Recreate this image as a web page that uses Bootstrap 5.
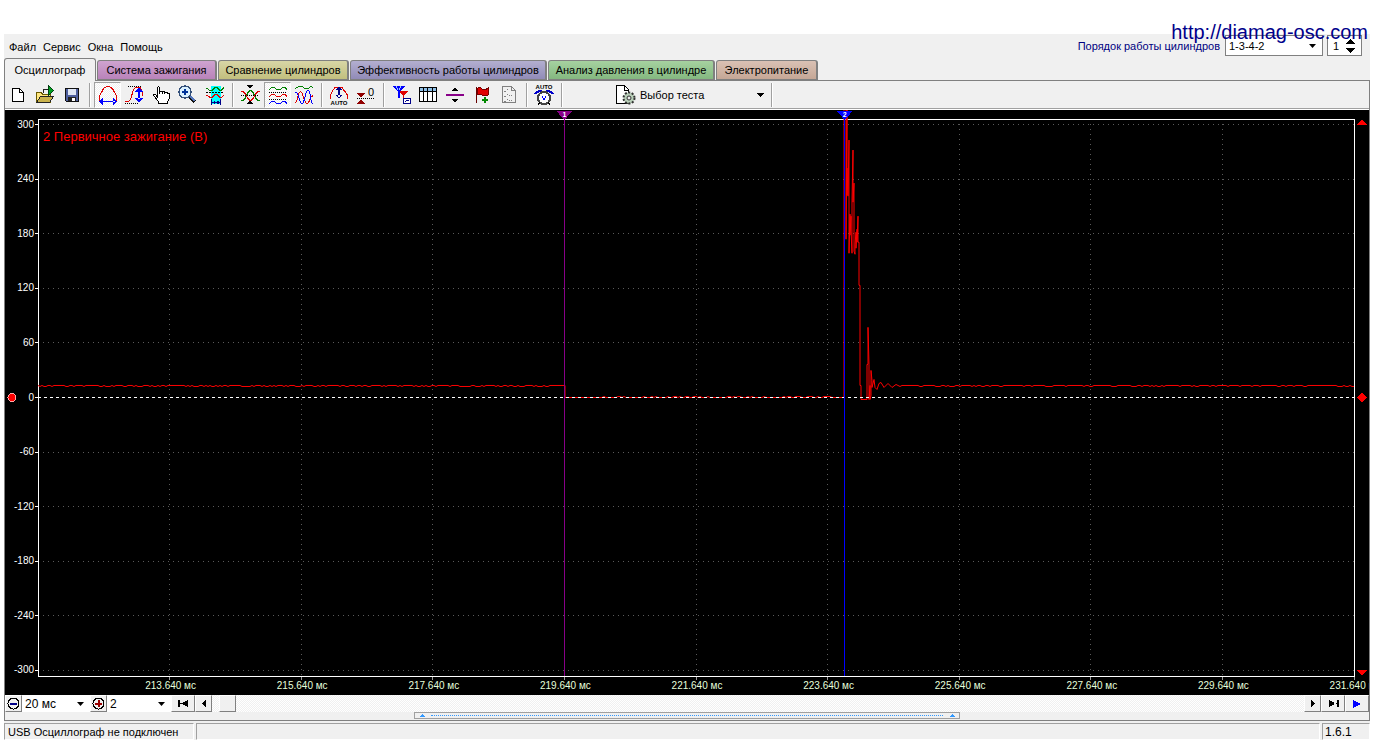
<!DOCTYPE html>
<html lang="ru">
<head>
<meta charset="utf-8">
<meta name="viewport" content="width=device-width, initial-scale=1">
<title>USB Осциллограф</title>
<link rel="stylesheet" href="https://cdn.jsdelivr.net/npm/bootstrap@5.3.0/dist/css/bootstrap.min.css">
<style>
  body { background: #fff; color: #000; font: 11px/14px "Liberation Sans", Arial, sans-serif; padding: 34px 12px 4px 4px; min-height: 100vh; }
  .app { background: #f0f0f0; }
  a { color: inherit; text-decoration: none; }
  .site-url { position: absolute; right: 14px; top: 20px; font-size: 20px; line-height: 24px; color: #00008b; z-index: 5; }
  .menubar { height: 24px; }
  .menubar nav { padding: 6px 5px 0; gap: 7px; }
  .order-box { padding-top: 1px; }
  .order { color: navy; margin-right: 5px; }
  select, input { font: inherit; color: #000; border: 0; border-radius: 0; background-color: #fff; appearance: none; padding: 0 3px; outline-offset: -1px; }
  select { background-image: url("data:image/svg+xml,%3Csvg xmlns='http://www.w3.org/2000/svg' width='7' height='4'%3E%3Cpath d='M0 0h7L3.5 4z'/%3E%3C/svg%3E"); background-repeat: no-repeat; background-position: right 6px center; }
  .framed { border: 1px solid #808080; height: 21px; background-color: #fff; }
  select.framed { width: 98px; }
  .spin { width: 35px; }
  .spin input { width: 11px; text-align: right; padding: 0; appearance: textfield; -moz-appearance: textfield; }
  .spin input::-webkit-inner-spin-button { display: none; }
  .spin span { margin-left: 7px; }
  button { border: 0; padding: 0; background: transparent; color: inherit; line-height: 0; }
  svg { display: block; shape-rendering: crispEdges; }
  .tabs { height: 22px; padding: 2px 0 0; gap: 1px; }
  .tabs button { font-size: 11px; line-height: 14px; height: 20px; border: 1px solid #808080; border-right-width: 2px; border-radius: 3px 3px 0 0; white-space: nowrap; text-align: center; }
  .tabs button.on { background: #f0f0f0; height: 23px; margin: -2px 0 -1px; border-bottom: 0; border-right-width: 1px; width: 92px; position: relative; }
  .t1 { width: 120px; background: linear-gradient(#cfa3d0, #b983ba); }
  .t2 { width: 131px; background: linear-gradient(#d8d6a6, #c2bf7e); }
  .t3 { width: 197px; background: linear-gradient(#b3afd0, #918bb7); }
  .t4 { width: 167px; background: linear-gradient(#a6d2a0, #84b880); }
  .t5 { width: 102px; background: linear-gradient(#dac1b4, #c5a796); }
  .sheet { border: 1px solid #808080; }
  .tools { height: 28px; border-bottom: 1px solid #a0a0a0; padding-top: 1px; }
  .tools button { width: 27px; height: 26px; }
  .tools .down { background: repeating-conic-gradient(#fff 0 25%, #f0f0f0 0 50%) 0 0/2px 2px; border: 1px solid; border-color: #a0a0a0 #fff #fff #a0a0a0; }
  .down svg { margin: -1px; }
  .vsep { width: 8px; height: 24px; margin: 1px 0; background: linear-gradient(90deg, transparent 3px, #a0a0a0 3px 4px, #fff 4px 5px, transparent 5px); }
  .tools .pick { width: 154px; margin-left: 48px; line-height: 14px; }
  .scope { background: #000; border-top: 1px solid #fff; padding: 9px 15px 19px 33px; overflow: hidden; min-height: 300px; height: 1px; }
  .scope svg { overflow: visible; }
  .scope text { font-size: 10px; fill: #fff; }
  .scope .chan { font-size: 13px; fill: #f00; }
  .scope .times text { fill: #e6ffdc; text-anchor: middle; }
  .scope .volts text { text-anchor: end; }
  .scope .pin text { font-size: 7px; font-weight: bold; text-anchor: middle; }
  .nav-row { height: 17px; }
  .nav-row select { height: 17px; font-size: 12px; }
  .sweep { width: 68px; }
  .factor { width: 64px; }
  .btn3d { background: #f0f0f0; height: 17px; border: 1px solid; border-color: #fff #808080 #808080 #fff; display: flex; align-items: center; justify-content: center; flex: none; }
  .w-s { width: 17px; } .w-m { width: 24px; }
  .track { background: repeating-conic-gradient(#fff 0 25%, #f0f0f0 0 50%) 0 0/2px 2px; padding-left: 7px; }
  .strip { height: 8px; }
  .overview { width: 40%; margin-left: 30%; height: 7px; border: 1px solid #a0a0a0; background: #f0f0f0; }
  .overview i { border-top: 1px dotted #3399ff; height: 0; margin: 0 6px; }
  .status { margin-top: 2px; gap: 2px; }
  .status div { border: 1px solid; border-color: #a0a0a0 #fff #fff #a0a0a0; height: 17px; padding: 1px 3px; white-space: nowrap; }
  .state { width: 190px; }
  .status .version { width: 48px; padding-left: 2px; font-size: 12px; }
</style>
</head>
<body class="d-flex flex-column">
<a class="site-url" href="http://diamag-osc.com">http://diamag-osc.com</a>
<div class="app d-flex flex-column flex-grow-1">
  <header class="menubar d-flex align-items-start">
    <nav class="d-flex"><a href="#">Файл</a><a href="#">Сервис</a><a href="#">Окна</a><a href="#">Помощь</a></nav>
    <div class="d-flex ms-auto align-items-center order-box">
      <label class="order" for="order">Порядок работы цилиндров</label>
      <select id="order" class="framed me-1"><option>1-3-4-2</option></select>
      <div class="framed spin d-flex align-items-center me-2">
        <input type="number" value="1" aria-label="Цилиндр">
        <span class="d-flex flex-column gap-1"><button aria-label="Больше"><svg width="9" height="5"><path d="M4.5 0L9 5H0z"/></svg></button><button aria-label="Меньше"><svg width="9" height="5"><path d="M4.5 5L9 0H0z"/></svg></button></span>
      </div>
    </div>
  </header>
  <div class="tabs d-flex" role="tablist">
    <button class="on" role="tab" aria-selected="true">Осциллограф</button><button class="t1" role="tab">Система зажигания</button><button class="t2" role="tab">Сравнение цилиндров</button><button class="t3" role="tab">Эффективность работы цилиндров</button><button class="t4" role="tab">Анализ давления в цилиндре</button><button class="t5" role="tab">Электропитание</button>
  </div>
  <main class="sheet d-flex flex-column flex-grow-1">
    <div class="tools d-flex" role="toolbar">
      <button aria-label="Новый"><svg width="27" height="26"><path d="M7.500 6.500h7l4 4v9h-11z" fill="#fff" stroke="#000"/><path d="M14.500 6.500v4h4" fill="none" stroke="#000"/></svg></button>
      <button aria-label="Открыть"><svg width="27" height="26"><path d="M4.500 20.500v-10h5l1 2h8v8z" fill="#ffe680" stroke="#6b5a00"/><path d="M4.500 20.500l4-6h13l-4 6z" fill="#c9b24c" stroke="#222"/><path d="M11.500 10.500v-3h4" fill="none" stroke="#222"/><path d="M16.500 3.500l5 5-5 5z" fill="#00a020" stroke="#004010"/></svg></button>
      <button aria-label="Сохранить"><svg width="27" height="26"><path d="M6.500 6.500h13v13h-12l-1-1z" fill="#4e5f9e" stroke="#111"/><path d="M9 7h8v6H9z" fill="#dfe6f5"/><path d="M9 15h8v4H9z" fill="#222"/><path d="M13 16h3v3h-3z" fill="#fff"/></svg></button>
      <span class="vsep"></span>
      <button class="down" aria-label="Период"><svg width="27" height="26"><path d="M5.500 19V15Q6 12 8 9.500Q10 4.500 14 4.500T20 9.500Q22 12 22.500 15V19" fill="none" stroke="#e00000"/><path d="M7 19h14v1H7zM5 19.500l4-4v8zM23 19.500l-4-4v8z" fill="#00f"/></svg></button>
      <button aria-label="Размах"><svg width="27" height="26"><path d="M7 4.500h13M4 21.500h14" stroke="#000" stroke-dasharray="1 1"/><path d="M4 19.500h3q3-1 4-7t4-7h3q3 0 4 8" fill="none" stroke="#e00000"/><path d="M17 9h2v8h-2zM18 5l4 5h-8zM18 21l4-5h-8z" fill="#00f"/></svg></button>
      <button aria-label="Рука"><svg width="27" height="26"><path d="M9.500 15.500V5.500q1-2 2 0v6-2q2-1 2.500 0v2-2q2-1 2.500 0v2-1q2-1 3 0v1q2-1 2 1v4l-2 3v2h-9v-2l-5-6q0-2 2-1z" fill="#fff" stroke="#000"/></svg></button>
      <button aria-label="Масштаб"><svg width="27" height="26" shape-rendering="auto"><path d="M14 14l6 6" stroke="#111" stroke-width="4"/><path d="M14 13l6 6" stroke="#5577bb" stroke-width="2"/><circle cx="10" cy="10" r="6" fill="#d9f0ff" stroke="#34507a" stroke-width="1.500"/><path d="M10 7v6M7 10h6" stroke="#003399" stroke-width="2"/></svg></button>
      <button aria-label="Сечение"><svg width="27" height="26"><path d="M9 4h10v18H9z" fill="#0ff"/><path d="M4 6.500q2 0 4 2h2l3-3h2l3 3h1l3-3" fill="none" stroke="green"/><path d="M4 10.500h18" stroke="#000" stroke-dasharray="2 1"/><path d="M4 13.500q3 0 4 2h2l3-3h2l3 3h1l3-2" fill="none" stroke="#e00000"/><path d="M9.500 17v6M18.500 17v6M10 20.500h8" stroke="#008"/><path d="M10 20.500l3-2v4zM18 20.500l-3-2v4z" fill="#008"/></svg></button>
      <span class="vsep"></span>
      <button aria-label="Сжать"><svg width="27" height="26"><path d="M4 18.500h2l2-2 3-6 2-2h1l2 2 3 6 2 2h2" fill="none" stroke="green"/><path d="M4 9.500h2l2 2 3 5 2 2h1l2-2 3-5 2-2h2" fill="none" stroke="#e00000"/><path d="M4 13.500h18" stroke="#000" stroke-dasharray="1 1"/><path d="M10 3h6l-3 4zM10 22h6l-3-4z"/></svg></button>
      <button class="down" aria-label="Раздельно"><svg width="27" height="26" fill="none"><path d="M5 7.500l3-2h2l3 2h3l3-2h2l2 2" stroke="green"/><path d="M5 10.500h18M5 17.500h18" stroke="#000" stroke-dasharray="1 1"/><path d="M5 14.500l3-2h2l3 2h3l3-2h2l2 2" stroke="#e00000"/><path d="M5 21.500l3-2h2l3 2h3l3-2h2l2 2" stroke="#00f"/></svg></button>
      <button aria-label="Вместе"><svg width="27" height="26" fill="none"><path d="M4 6.500l4-2h3l3 2h3l3-2 2 1" stroke="green"/><path d="M4 20.500C7 20 7 9.500 9.500 9.500S13 21.500 16 21.500 19 13 22 14" stroke="#e00000"/><path d="M4 10.500C8 9 8 21.500 11 21.500S14 8.500 17 8.500 19 21.500 22 21.500" stroke="#00f"/></svg></button>
      <span class="vsep"></span>
      <button aria-label="Авто"><svg width="27" height="26"><path d="M4.500 17v-4l2-4 3-4h6l3 4 3 4v4" fill="none" stroke="#e00000"/><path d="M12 7h2v8h-2zM13 4l3 4h-6zM13 17l3-4h-6z" fill="#008"/><text x="13" y="23" font-size="6" font-weight="bold" text-anchor="middle">AUTO</text></svg></button>
      <button aria-label="Ноль"><svg width="27" height="26"><path d="M4 11h8l-4 5zM4 22h8l-4-5z" fill="#900000"/><path d="M4 16.500h18" stroke="#000" stroke-dasharray="1 1"/><text x="15" y="14" font-size="11">0</text></svg></button>
      <span class="vsep"></span>
      <button aria-label="Фильтр"><svg width="27" height="26"><path d="M11 9h9l-4 5v5h-1v-5z" fill="#e00000"/><path d="M4 4h13l-5 6v6h-2v-6z" fill="#00f"/><path d="M8 4l2 4M13 4l-2 4" stroke="#9cf"/><path d="M15.500 16.500h7v5h-7z" fill="#fff" stroke="#008"/><path d="M17 19.500l2-1 2 0" stroke="#008" fill="none"/></svg></button>
      <button aria-label="Таблица"><svg width="27" height="26"><path d="M4.500 5.500h17v14h-17z" fill="#fff" stroke="#000"/><path d="M5 6h16v3H5z" fill="#8fc0e8"/><path d="M4 9.500h18M8.500 6v13M12.500 6v13M17.500 6v13" stroke="#000"/></svg></button>
      <button aria-label="Линия"><svg width="27" height="26"><path d="M4 12h18v2H4z" fill="#808"/><path d="M10 9h6l-3-4zM10 17h6l-3 4z"/></svg></button>
      <button aria-label="Флаг"><svg width="27" height="26"><path d="M7.500 5v16" stroke="#600"/><path d="M8 7q3-3 5 0 3 2 6-1v7q-3 2-6 0-2-2-5 0z" fill="#e00000" stroke="#700"/><path d="M13 17h6v2h-6zM15 15h2v6h-2z" fill="#080"/></svg></button>
      <button aria-label="Список"><svg width="27" height="26" fill="none" stroke="#808080"><path d="M6.500 4.500h9l4 4v12h-13z"/><path d="M15.500 4.500v4h4"/><path d="M8 9l1 1 3-3M8 14l1 1 3-3M8 19l1 1 3-3M13 13.500h4M13 18.500h4" stroke-dasharray="1 1"/></svg></button>
      <span class="vsep"></span>
      <button aria-label="Автовольтметр"><svg width="27" height="26"><text x="13" y="7" font-size="6" font-weight="bold" text-anchor="middle">AUTO</text><path d="M4 12q2-3 7-3M22 12q-2-3-7-3" fill="none" stroke="#00c" stroke-width="2"/><circle cx="13" cy="16" r="6" fill="#fff" stroke="#444" stroke-width="2"/><path d="M7 23l2-3M19 23l-2-3" stroke="#000"/><path d="M11 14l2 4 2-4" fill="none" stroke="#00f"/></svg></button>
      <span class="vsep"></span>
      <button class="pick d-flex align-items-center"><svg width="26" height="26"><path d="M2.500 3.500h8l4 4v14h-12z" fill="#fff" stroke="#000"/><path d="M10.500 3.500v5h4" fill="none" stroke="#000"/><g shape-rendering="auto"><circle cx="15" cy="16" r="5.500" fill="#b8ceb8" stroke="#333" stroke-width="2" stroke-dasharray="2 1.500"/><circle cx="15" cy="16" r="2" fill="#eee" stroke="#333"/></g></svg><span>Выбор теста</span><svg class="ms-auto me-1" width="7" height="4"><path d="M0 0h7l-3.500 4z"/></svg></button>
      <span class="vsep"></span>
    </div>
    <div class="scope flex-grow-1">
      <svg id="plot" width="100%" height="100%">
        <g id="grid" stroke="#5a5a5a" stroke-dasharray="1 4"></g>
        <g id="volts" class="volts"></g>
        <g id="times" class="times"></g>
        <text class="chan" x="5" y="22">2 Первичное зажигание (В)</text>
        <rect x="0" y="0" width="100%" height="100%" fill="none" stroke="#fff"/>
        <svg width="100%" height="100%" viewBox="0 0 1316 556" preserveAspectRatio="none"><path id="trace" fill="none" stroke="#f00" vector-effect="non-scaling-stroke"/></svg>
        <line x1="0" x2="100%" y1="50%" y2="50%" stroke="#fff" stroke-dasharray="3 3"/>
        <svg class="pin" x="40%" y="0"><path d="M-8-8H8L0 1z" fill="#808"/><text x="0" y="-2">1</text></svg>
        <line x1="40%" x2="40%" y1="0" y2="100%" stroke="#808"/>
        <svg class="pin" x="61.3%" y="0"><path d="M-8-8H8L0 1z" fill="#00f"/><text x="0" y="-2">2</text></svg>
        <line x1="61.3%" x2="61.3%" y1="0" y2="100%" stroke="#00f"/>
        <svg x="100%" y="0"><path d="M8 0l5 6H3z" fill="red"/></svg>
        <svg x="100%" y="50%"><path d="M8-5l5 5-5 5-5-5z" fill="red"/></svg>
        <svg x="100%" y="100%"><path d="M8 0l5-6H3z" fill="red"/></svg>
        <svg x="0" y="50%"><circle cx="-26" cy="0" r="4" fill="red" stroke="#faa"/></svg>
      </svg>
    </div>
    <div class="nav-row d-flex">
      <button class="btn3d w-s" aria-label="Уменьшить"><svg width="13" height="13" shape-rendering="auto"><circle cx="6.500" cy="6.500" r="5.500" fill="none" stroke="#000"/><path d="M3 5.500h7v2H3z" fill="#008"/></svg></button>
      <select class="sweep" aria-label="Развёртка"><option>20 мс</option></select>
      <button class="btn3d w-s" aria-label="Увеличить"><svg width="13" height="13" shape-rendering="auto"><circle cx="6.500" cy="6.500" r="5.500" fill="none" stroke="#000"/><path d="M3 5.500h7v2H3zM5.500 3h2v7h-2z" fill="#900"/></svg></button>
      <select class="factor" aria-label="Множитель"><option>2</option></select>
      <button class="btn3d w-m" aria-label="В начало"><svg width="11" height="7"><path d="M0 0h2v7H0zM2 3h3v1H2zM10 0v7L3 3.500z"/></svg></button>
      <button class="btn3d w-s" aria-label="Назад"><svg width="4" height="7"><path d="M4 0v7L0 3.500z"/></svg></button>
      <div class="track flex-grow-1"><button class="btn3d w-s" aria-label="Ползунок"></button></div>
      <button class="btn3d w-s" aria-label="Вперёд"><svg width="4" height="7"><path d="M0 0v7l4-3.500z"/></svg></button>
      <button class="btn3d w-m" aria-label="В конец"><svg width="11" height="7"><path d="M9 0h2v7H9zM6 3h3v1H6zM1 0v7l7-3.500z"/></svg></button>
      <button class="btn3d w-m" aria-label="Пуск"><svg width="8" height="8"><path d="M0 0v8l8-4z" fill="#00f"/></svg></button>
    </div>
    <div class="strip"><div class="overview d-flex align-items-center px-1"><svg width="6" height="3"><path d="M3 0l3 3H0z" fill="#39f"/></svg><i class="flex-grow-1"></i><svg width="6" height="3"><path d="M3 0l3 3H0z" fill="#39f"/></svg></div></div>
  </main>
  <footer class="status d-flex"><div class="state">USB Осциллограф не подключен</div><div class="flex-grow-1"></div><div class="version">1.6.1</div></footer>
</div>
<script src="https://cdn.jsdelivr.net/npm/bootstrap@5.3.0/dist/js/bootstrap.bundle.min.js"></script>
<script>
  const byId = id => document.getElementById(id);
  let grid = '', volts = '', times = '';
  for (let k = 0; k <= 10; k++) {
    const y = (100 * (5.5 + 54.5 * k) / 556).toFixed(2) + '%';
    if (k !== 5) grid += `<line x1="0" x2="100%" y1="${y}" y2="${y}"/>`;
    volts += `<line x1="-3" x2="0" y1="${y}" y2="${y}" stroke="#fff"/><text x="-4" y="${y}" dy="3">${300 - 60 * k}</text>`;
  }
  for (let k = 1; k <= 10; k++) {
    const x = k * 10 + '%';
    if (k < 10) grid += `<line x1="${x}" x2="${x}" y1="0" y2="100%"/>`;
    times += `<svg x="${x}" y="100%"><path d="M0 0v4" stroke="#999"/><text x="1" y="13">${(211.64 + 2 * k).toFixed(3)} мс</text></svg>`;
  }
  byId('grid').innerHTML = grid; byId('volts').innerHTML = volts; byId('times').innerHTML = times;

  // repeatable noise for the quiet parts of the signal
  let seed = 7;
  const rnd = () => (seed = seed * 16807 % 2147483647) / 2147483647;
  const quiet = (from, to, level, dip, chance) => {
    let s = '';
    for (let x = from; x < to; x += 2) s += `L${x} ${level + (rnd() < chance ? dip : 0)}`;
    return s;
  };
  const spark = [[806,278],[806,-10],[808,-10],[808,120],[809,-10],[809,76],[810,49],[810,77],[811,21],[811,134],[812,95],[812,116],[813,97],[813,112],[814,134],[814,81],[815,31],[815,83],[816,64],[816,132],[817,135],[817,125],[818,113],[818,129],[819,110],[819,123],[820,97],[820,123],[821,123],[821,166],[822,166],[822,266],[823,266],[823,280],[829,280],[829,245],[830,245],[830,208],[831,245],[831,280],[832,266],[832,280],[833,276],[833,251],[834,261],[834,268],[836,260],[837,268],[839,270],[841,264],[843,263],[846,268],[850,264],[854,268],[858,265],[862,267]];
  byId('trace').setAttribute('d', 'M0 266' + quiet(2, 526, 266, 1, .4) + 'L527 266L527 278' + quiet(528, 804, 278, -1, .3)
    + spark.map(p => 'L' + p.join(' ')).join('') + quiet(864, 1317, 266, 1, .3));
</script>
</body>
</html>
